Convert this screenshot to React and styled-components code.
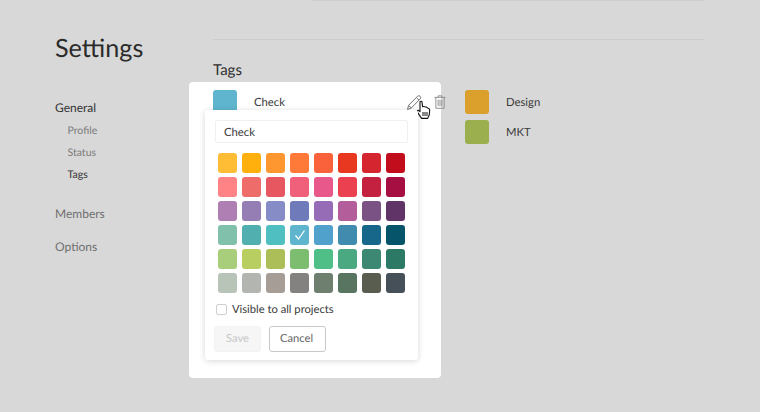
import React from "react";
import styled, { createGlobalStyle } from "styled-components";

const Global = createGlobalStyle`
  html, body { margin: 0; padding: 0; background: #d8d8d8; }
  body { font-family: Lato, "Open Sans", sans-serif; color: #333; text-rendering: geometricPrecision; }
  #root { width: 760px; height: 412px; overflow: hidden; }
`;

const Page = styled.div`
  width: 760px; height: 412px; display: flex; background: #d8d8d8; overflow: hidden;
`;
const Sidebar = styled.aside`
  width: 158px; padding: 33px 0 0 55px; flex: none;
`;
const Title = styled.h1`
  margin: 0 0 36px; font-size: 25.2px; line-height: 31px; font-weight: 400; color: #2b2b2b;
`;
const NavMain = styled.div`
  font-size: 12px; line-height: 16px; color: ${p => (p.$active ? "#333" : "#6f6f6f")};
  margin-bottom: ${p => p.$mb || 0}px;
`;
const NavSub = styled.div`
  font-size: 10.5px; line-height: 14px; padding-left: 12.5px; margin-top: 8px;
  color: ${p => (p.$active ? "#333" : "#7c7c7c")};
`;
const SubList = styled.div`
  margin-top: 8px; margin-bottom: 24px; display: flex; flex-direction: column;
  & > div:first-child { margin-top: 0; }
`;
const Main = styled.main`
  width: 491px; flex: none; position: relative;
`;
const TopEdge = styled.div`
  height: 1px; margin-left: 99px; background: #cfcfcf;
`;
const Rule = styled.div`
  height: 1px; margin-top: 38px; background: #cccccc;
`;
const Heading = styled.h2`
  margin: 21px 0 3px; font-size: 15px; line-height: 18px; font-weight: 400; color: #2f2f2f;
`;
const Columns = styled.div`
  display: flex; margin-left: -24px;
`;
const Panel = styled.section`
  position: relative; width: 252px; height: 296px; flex: none; background: #fff;
  border-radius: 4px; box-sizing: border-box; padding: 8px 0 0 24px;
`;
const TagRow = styled.div`
  display: flex; align-items: center; height: 24px; margin-bottom: ${p => p.$mb || 0}px;
`;
const Swatch = styled.div`
  width: 24px; height: 24px; border-radius: 3px; background: ${p => p.$c}; flex: none;
`;
const TagName = styled.div`
  font-size: 11.3px; margin: 2px 0 0 17px; color: #3a3a3a; line-height: 24px;
`;
const IconSlot = styled.svg`
  position: absolute; display: block;
  left: ${p => p.$x}px; top: ${p => p.$y}px;
`;
const Popup = styled.div`
  position: absolute; left: 16px; top: 28px; width: 213px; height: 250px; box-sizing: border-box;
  background: #fff; border-radius: 3px; box-shadow: 0 1px 6px rgba(0,0,0,.16);
  padding: 10px 10px 0;
`;
const NameInput = styled.div`
  height: 23px; width: 193px; box-sizing: border-box; border: 1px solid #f0f0f0; border-radius: 2px;
  font-size: 11.3px; line-height: 23px; padding-left: 8px; color: #3a3a3a;
`;
const Palette = styled.div`
  display: grid; grid-template-columns: repeat(8, 19px); grid-auto-rows: 20px;
  column-gap: 5px; row-gap: 4px; margin: 10px 0 0 3px;
`;
const Color = styled.div`
  border-radius: 3px; background: ${p => p.$c}; display: flex; align-items: center; justify-content: center;
`;
const CheckRow = styled.label`
  display: flex; align-items: center; gap: 5px; margin: 9px 0 0 1px; font-size: 11.2px; line-height: 15px; color: #3a3a3a;
`;
const Box = styled.span`
  width: 9px; height: 9px; border: 1px solid #cfcfcf; border-radius: 2px; background: #fff; flex: none;
`;
const Buttons = styled.div`
  display: flex; gap: 8px; margin-top: 9px; margin-left: -1px;
`;
const Btn = styled.div`
  height: 26px; box-sizing: border-box; border-radius: 3px; font-size: 11.2px; line-height: 24px; text-align: center;
  width: ${p => p.$w}px;
  padding-right: ${p => (p.$off ? 0 : 2)}px;
  border: 1px solid ${p => (p.$off ? "#f3f3f3" : "#c9c9c9")};
  background: ${p => (p.$off ? "#f6f6f6" : "#fff")};
  color: ${p => (p.$off ? "#c6c6c6" : "#666")};
`;
const Side = styled.div`
  margin-left: 24px; padding-top: 8px;
`;

const palette = [
  ["#FFBC35","#FFB00D","#FF9730","#FF7A38","#F9623B","#E8381F","#D5262F","#C20D1D"],
  ["#FF8285","#EE6D6B","#E65760","#F0607B","#E9588A","#EA4050","#C42140","#A60F42"],
  ["#AF7EB3","#947EB3","#858CC6","#6F7ABA","#976CB7","#B35E9A","#7A5284","#613468"],
  ["#81C1AC","#52AFAF","#4FBFC2","#5FB5CE","#50A1CB","#418BAE","#17678A","#05546A"],
  ["#A9CE7B","#B9CE61","#ABBE58","#7CBD70","#4FBE87","#4AA981","#3C8873","#2C7A66"],
  ["#B9C4B9","#B3B5B0","#A69E96","#848280","#6E7F70","#587561","#585D50","#465058"],
].flat();

const CheckMark = () => (
  <svg width="12" height="12" viewBox="0 0 12 12" fill="none">
    <path d="M1.5 6.5 L4.5 10 L10.5 1.5" stroke="#fff" strokeWidth="1.3" />
  </svg>
);

export default function App() {
  return (
    <Page>
      <Global />
      <Sidebar>
        <Title>Settings</Title>
        <NavMain $active>General</NavMain>
        <SubList>
          <NavSub>Profile</NavSub>
          <NavSub>Status</NavSub>
          <NavSub $active>Tags</NavSub>
        </SubList>
        <NavMain $mb={17}>Members</NavMain>
        <NavMain>Options</NavMain>
      </Sidebar>
      <Main>
        <TopEdge />
        <Rule />
        <Heading>Tags</Heading>
        <Columns>
          <Panel>
            <TagRow>
              <Swatch $c="#5FB5CE" />
              <TagName>Check</TagName>
            </TagRow>
            <IconSlot $x={217} $y={12} width="17" height="17" viewBox="0 0 17 17" fill="none" stroke="#777" strokeWidth="1">
              <path d="M1.5 15.5 L2.6 11.4 L11.6 2.2 Q12.8 1.1 14.2 2.3 Q15.3 3.6 14.3 4.8 L5.3 14 Z" />
              <path d="M2.6 11.4 L5.3 14 M10.4 3.5 L13 6.1" />
            </IconSlot>
            <IconSlot $x={245} $y={13} width="12" height="14" viewBox="0 0 13 15" fill="none" stroke="#8a8a8a" strokeWidth="1">
              <path d="M.5 2.5 H12.5 M4.5 2.5 V.8 H8.5 V2.5 M2 2.5 V14.3 H11 V2.5" />
              <path d="M4.5 5 V12 M6.5 5 V12 M8.5 5 V12" />
            </IconSlot>
            <IconSlot $x={227} $y={18} width="15" height="20" viewBox="0 0 15 20">
              <path d="M4 1.6 Q5.5 .6 6 2 L6.6 6.8 Q8.3 6 9.2 7 Q10.9 6.8 11.5 8 Q13.4 8.2 13.7 9.7 L13.3 14.8 L11.7 18.4 H5.6 L1.5 12.4 Q.6 10.6 2.1 10.2 L4 11.6 Z" fill="#fff" stroke="#111" strokeWidth="1.1" strokeLinejoin="round" />
              <path d="M7 12 V16 M9 12 V16 M11 12 V16" stroke="#111" strokeWidth="1" />
            </IconSlot>
            <Popup>
              <NameInput>Check</NameInput>
              <Palette>
                {palette.map((c, i) => (
                  <Color key={i} $c={c}>{i === 27 && <CheckMark />}</Color>
                ))}
              </Palette>
              <CheckRow><Box />Visible to all projects</CheckRow>
              <Buttons>
                <Btn $off $w={47}>Save</Btn>
                <Btn $w={57}>Cancel</Btn>
              </Buttons>
            </Popup>
          </Panel>
          <Side>
            <TagRow $mb={6}>
              <Swatch $c="#DBA02C" />
              <TagName>Design</TagName>
            </TagRow>
            <TagRow>
              <Swatch $c="#9CAF4F" />
              <TagName>MKT</TagName>
            </TagRow>
          </Side>
        </Columns>
      </Main>
    </Page>
  );
}
